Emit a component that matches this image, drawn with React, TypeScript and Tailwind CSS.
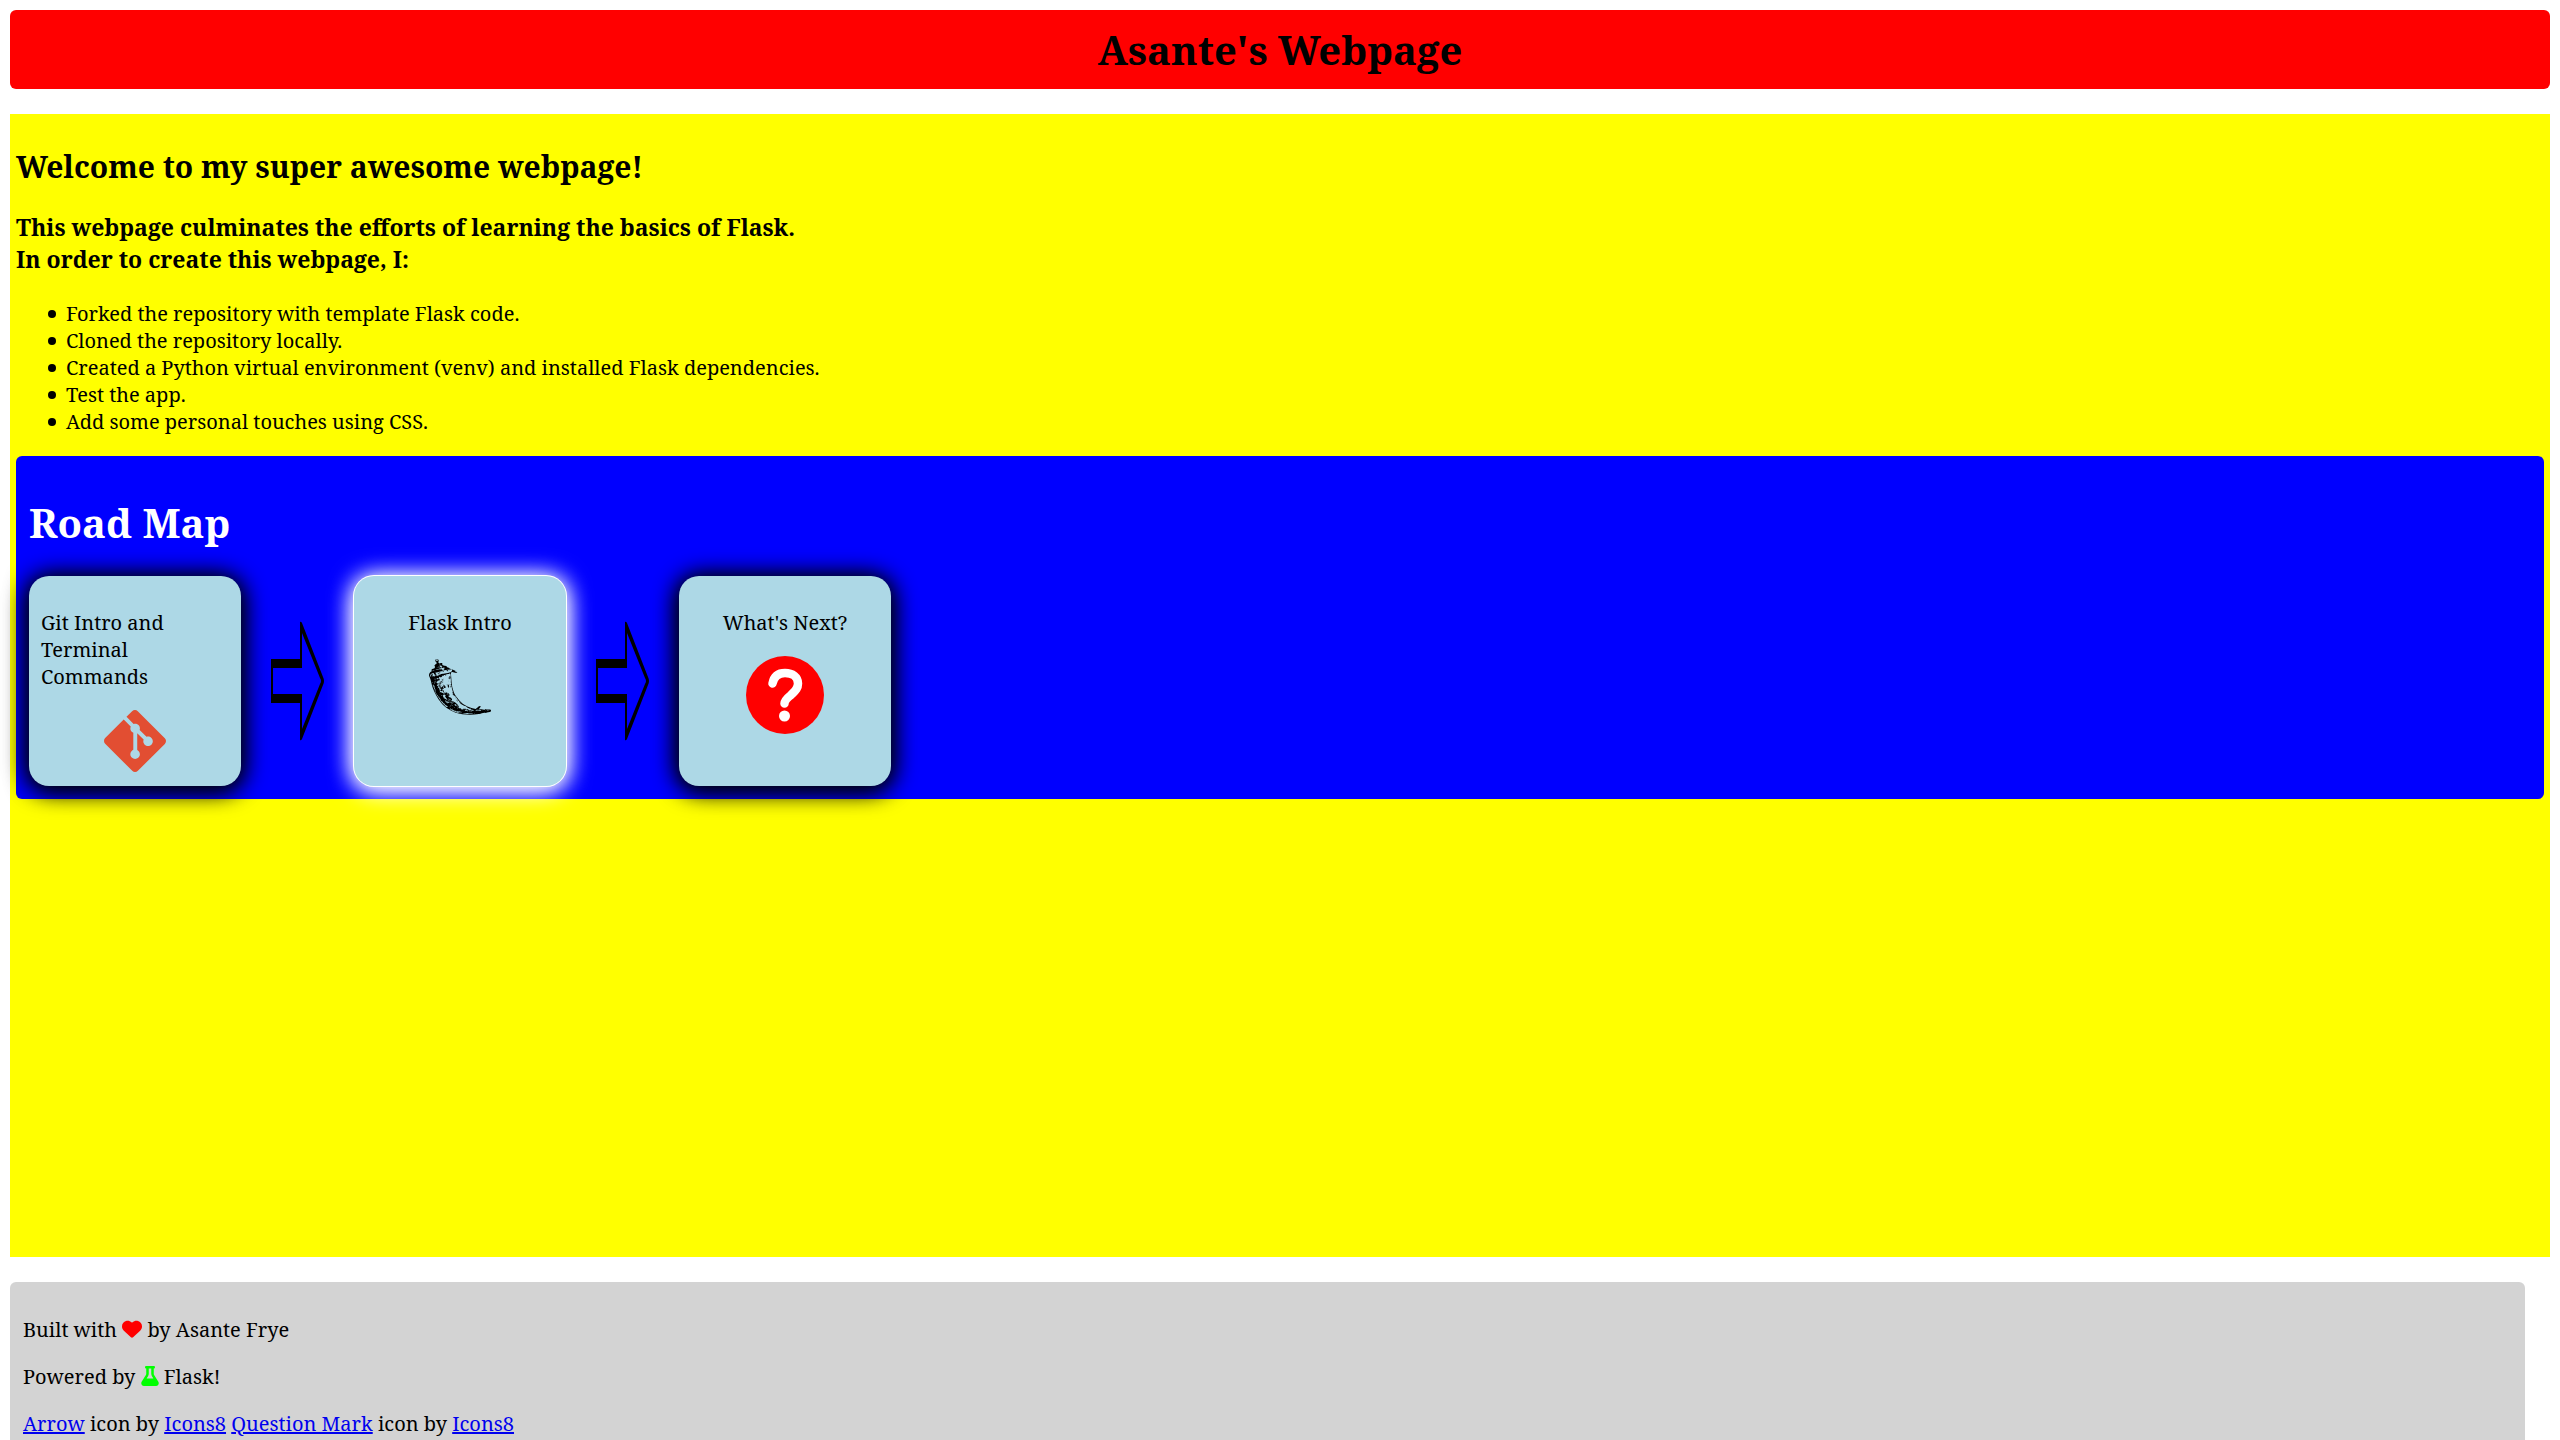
import type { ReactNode } from "react";
import { FaFlask, FaHeart } from "react-icons/fa6";
import { SiFlask, SiGit } from "react-icons/si";

const steps = [
  "Forked the repository with template Flask code.",
  "Cloned the repository locally.",
  "Created a Python virtual environment (venv) and installed Flask dependencies.",
  "Test the app.",
  "Add some personal touches using CSS.",
];

function Arrow() {
  return (
    <svg
      viewBox="0 0 55 120"
      className="mx-[29px] h-[120px] w-[55px] shrink-0"
      aria-hidden="true"
    >
      <path
        fillRule="evenodd"
        d="M1 38H30V1Q31 0 32 2L53 56Q55 60 53 64L32 118Q31 120 30 119V82H1ZM3 47H32V12L50 57Q52 60 50 63L32 108V73H3Z"
      />
    </svg>
  );
}

function QuestionMark() {
  return (
    <svg viewBox="0 0 78 78" className="h-[78px] w-[78px]" aria-hidden="true">
      <circle cx="39" cy="39" r="39" fill="#ff0000" />
      <path
        d="M26.500 27.500C28 20 33 17 39 17C46.500 17 52 21 52 27.500C52 33 49 35 45 39C40 43 38.500 45 38.500 47.500"
        fill="none"
        stroke="#fff"
        strokeWidth="8.500"
        strokeLinecap="round"
      />
      <circle cx="38.500" cy="60" r="5.500" fill="#fff" />
    </svg>
  );
}

function Card({ label, active, children }: { label: string; active?: boolean; children: ReactNode }) {
  const glow = active
    ? "shadow-[0_0_0_1px_white,0_0_25px_white,0_5px_25px_white]"
    : "shadow-[0_0_25px_black,0_5px_25px_black]";
  return (
    <section
      className={`flex h-[210px] w-[212px] shrink-0 flex-col items-center rounded-[20px] bg-[#add8e6] px-3 pt-[33px] ${glow}`}
    >
      <p className="mb-5">{label}</p>
      {children}
    </section>
  );
}

function FooterLink({ children }: { children: ReactNode }) {
  return (
    <a href="#" className="text-[#0000ee] underline">
      {children}
    </a>
  );
}

export default function App() {
  return (
    <div className="flex min-h-screen flex-col gap-[25px] bg-white px-[10px] pt-[10px] font-['Noto_Serif',serif] text-[20px] leading-[27px] text-black">
      <header className="rounded-[6px] bg-[#ff0000] px-3 pt-[13px] pb-3 text-center">
        <h1 className="text-[40px] leading-[54px] font-bold">Asante's Webpage</h1>
      </header>

      <main className="flex-1 bg-[#ffff00] px-[6px] pt-8">
        <h2 className="mb-6 text-[30px] leading-[41px] font-bold">
          Welcome to my super awesome webpage!
        </h2>
        <h3 className="mb-[25px] text-[23px] leading-8 font-bold">
          This webpage culminates the efforts of learning the basics of Flask.
          <br />
          In order to create this webpage, I:
        </h3>
        <ul className="mb-[21px] pl-8">
          {steps.map((step) => (
            <li
              key={step}
              className="flex items-center gap-[10px] before:size-2 before:shrink-0 before:rounded-full before:bg-black"
            >
              {step}
            </li>
          ))}
        </ul>

        <section className="rounded-[6px] bg-[#0000ff] px-[13px] pt-10 pb-[13px]">
          <h1 className="mb-[26px] text-[40px] leading-[54px] font-bold text-white">Road Map</h1>
          <div className="flex items-center">
            <Card label="Git Intro and Terminal Commands">
              <SiGit className="h-[62px] w-[62px] text-[#e24e32]" />
            </Card>
            <Arrow />
            <Card label="Flask Intro" active>
              <SiFlask className="h-[62px] w-[62px]" />
            </Card>
            <Arrow />
            <Card label="What's Next?">
              <QuestionMark />
            </Card>
          </div>
        </section>
      </main>

      <footer className="mr-[25px] flex flex-col gap-5 rounded-t-[6px] bg-[#d3d3d3] px-[13px] pt-[34px] pb-[3px]">
        <p>
          Built with{" "}
          <FaHeart className="inline h-5 w-5 align-[-2px] text-[#ff0000]" aria-label="love" /> by
          Asante Frye
        </p>
        <p>
          Powered by{" "}
          <FaFlask className="inline h-5 w-[18px] align-[-2px] text-[#00ff00]" aria-hidden="true" />{" "}
          Flask!
        </p>
        <p>
          <FooterLink>Arrow</FooterLink> icon by <FooterLink>Icons8</FooterLink>{" "}
          <FooterLink>Question Mark</FooterLink> icon by <FooterLink>Icons8</FooterLink>
        </p>
      </footer>
    </div>
  );
}
